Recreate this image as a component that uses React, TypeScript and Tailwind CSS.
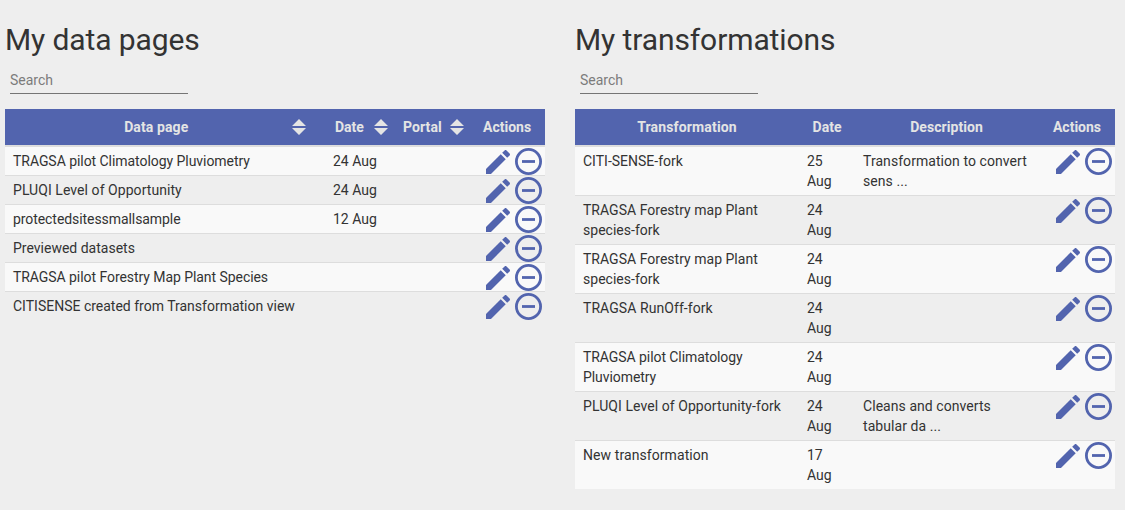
import React from "react";

const pages = [
  { name: "TRAGSA pilot Climatology Pluviometry", date: "24 Aug", tracking: "tracking-[-0.05px]" },
  { name: "PLUQI Level of Opportunity", date: "24 Aug", tracking: "tracking-[0.06px]" },
  { name: "protectedsitessmallsample", date: "12 Aug", tracking: "tracking-[-0.07px]" },
  { name: "Previewed datasets", date: "", tracking: "" },
  { name: "TRAGSA pilot Forestry Map Plant Species", date: "", tracking: "tracking-[-0.06px]" },
  { name: "CITISENSE created from Transformation view", date: "", tracking: "" },
];

const transformations = [
  { name: "CITI-SENSE-fork", date: "25 Aug", description: "Transformation to convert sens ...", tracking: "" },
  { name: "TRAGSA Forestry map Plant species-fork", date: "24 Aug", description: "", tracking: "tracking-[0.02px]" },
  { name: "TRAGSA Forestry map Plant species-fork", date: "24 Aug", description: "", tracking: "tracking-[0.02px]" },
  { name: "TRAGSA RunOff-fork", date: "24 Aug", description: "", tracking: "tracking-[0.07px]" },
  { name: "TRAGSA pilot Climatology Pluviometry", date: "24 Aug", description: "", tracking: "tracking-[-0.07px]" },
  { name: "PLUQI Level of Opportunity-fork", date: "24 Aug", description: "Cleans and converts tabular da ...", tracking: "tracking-[0.07px]" },
  { name: "New transformation", date: "17 Aug", description: "", tracking: "tracking-[0.08px]" },
];

function Sort() {
  return (
    <svg className="h-4 w-[14px] shrink-0" viewBox="0 0 14 16" fill="#e4e4e4">
      <path d="M0 7L7 0l7 7zM0 9h14l-7 7z" />
    </svg>
  );
}

function Actions() {
  return (
    <div className="flex h-7 w-[63px] shrink-0 items-start gap-[5px] pl-1 pt-px text-[#5264ae]">
      <svg className="mt-[2px] h-6 w-6 shrink-0" viewBox="3 3 18 18" fill="currentColor">
        <path d="M3 17.25V21h3.75L17.81 9.94l-3.75-3.75L3 17.25zM20.71 7.04c.39-.39.39-1.02 0-1.41l-2.34-2.34c-.39-.39-1.02-.39-1.41 0l-1.83 1.83 3.75 3.75 1.83-1.83z" />
      </svg>
      <svg className="h-[27px] w-[27px] shrink-0" viewBox="0 0 27 27" fill="none" stroke="currentColor">
        <circle cx="13.5" cy="13.5" r="12.1" strokeWidth="2.8" />
        <path d="M7 13.5h13" strokeWidth="2.8" />
      </svg>
    </div>
  );
}

function Heading({ title }: { title: string }) {
  return (
    <>
      <h1 className="h-[46px] text-[30px] leading-[40px] tracking-[-0.1px]">{title}</h1>
      <input
        placeholder="Search"
        className="ml-[5px] block h-[28px] w-[178px] border-b border-[#757575] bg-transparent text-[14px] outline-none placeholder:text-[#7c7c7c]"
      />
    </>
  );
}

export default function App() {
  return (
    <main className="flex h-[510px] w-[1125px] gap-[30px] overflow-hidden bg-[#eeeeee] px-[5px] pt-5 font-[Roboto,sans-serif] text-[14px] leading-5 text-[#333333]">
      <section className="w-[540px]">
        <Heading title="My data pages" />
        <div className="mt-[15px]">
          <div className="flex h-[38px] items-center border-b-2 border-[#dddddd] bg-[#5264ae] font-bold text-[#e4e4e4]">
            <div className="flex w-[320px] items-center pr-[19.5px]">
              <span className="flex-1 pl-[16px] text-center tracking-[0.1px]">Data page</span>
              <Sort />
            </div>
            <div className="flex w-[70px] items-center justify-between pl-[10px] pr-[7.5px]">Date<Sort /></div>
            <div className="flex w-[76px] items-center justify-between pl-[8px] pr-[7.5px] tracking-[0.1px]">Portal<Sort /></div>
            <div className="w-[74px] pl-[12px]">Actions</div>
          </div>
          {pages.map(({ name, date, tracking }) => (
            <div key={name} className="flex h-[29px] border-b border-[#dddddd] last:border-0 odd:bg-[#eeeeee] even:bg-[#f9f9f9]">
              <span className={`w-[320px] pl-2 pt-1 ${tracking}`}>{name}</span>
              <span className="w-[157px] pl-2 pt-1">{date}</span>
              <Actions />
            </div>
          ))}
        </div>
      </section>
      <section className="w-[540px]">
        <Heading title="My transformations" />
        <div className="mt-[15px]">
          <div className="flex h-[38px] items-center border-b-2 border-[#dddddd] bg-[#5264ae] text-center font-bold text-[#e4e4e4]">
            <span className="w-[224px] tracking-[0.15px]">Transformation</span>
            <span className="w-[56px]">Date</span>
            <span className="w-[183px] tracking-[0.05px]">Description</span>
            <span className="w-[77px] pl-px">Actions</span>
          </div>
          {transformations.map(({ name, date, description, tracking }, i) => (
            <div key={i} className="flex h-[49px] border-b border-[#dddddd] last:h-12 last:border-0 odd:bg-[#eeeeee] even:bg-[#f9f9f9]">
              <span className={`w-[224px] px-2 pt-1 ${tracking}`}>{name}</span>
              <span className="w-[56px] px-2 pt-1">{date}</span>
              <span className="w-[197px] pl-2 pr-[18px] pt-1 tracking-[0.06px]">{description}</span>
              <Actions />
            </div>
          ))}
        </div>
      </section>
    </main>
  );
}
